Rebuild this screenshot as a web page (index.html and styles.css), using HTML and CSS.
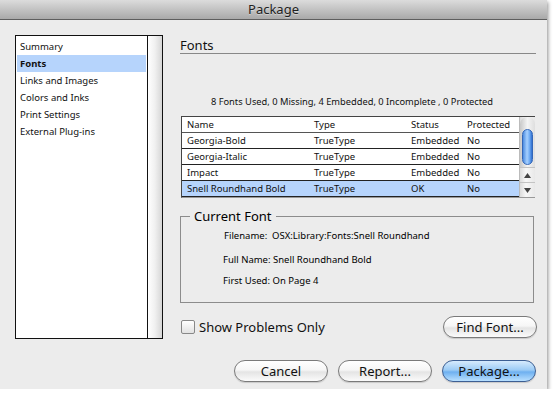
FILE: index.html
```html
<!DOCTYPE html>
<html>
<head>
    <title>Package</title>
    <link rel="stylesheet" href="styles.css">
</head>

<body>
    <div class="window">
        <div class="titlebar">Package</div>

        <div class="content">
            <div class="sidebar">
                <ul class="nav">
                    <li>Summary</li>
                    <li class="selected">Fonts</li>
                    <li>Links and Images</li>
                    <li>Colors and Inks</li>
                    <li>Print Settings</li>
                    <li>External Plug-ins</li>
                </ul>
                <div class="nav-scroll"></div>
            </div>

            <div class="main">
                <h2 class="section-title">Fonts</h2>
                <p class="summary">8 Fonts Used, 0 Missing, 4 Embedded, 0 Incomplete , 0 Protected</p>

                <div class="font-list">
                    <table class="font-table">
                        <tr class="head">
                            <td class="col-name">Name</td>
                            <td class="col-type">Type</td>
                            <td class="col-status">Status</td>
                            <td>Protected</td>
                        </tr>
                        <tr>
                            <td>Georgia-Bold</td>
                            <td>TrueType</td>
                            <td>Embedded</td>
                            <td>No</td>
                        </tr>
                        <tr>
                            <td>Georgia-Italic</td>
                            <td>TrueType</td>
                            <td>Embedded</td>
                            <td>No</td>
                        </tr>
                        <tr>
                            <td>Impact</td>
                            <td>TrueType</td>
                            <td>Embedded</td>
                            <td>No</td>
                        </tr>
                        <tr class="selected">
                            <td>Snell Roundhand Bold</td>
                            <td>TrueType</td>
                            <td>OK</td>
                            <td>No</td>
                        </tr>
                    </table>
                    <div class="scrollbar">
                        <div class="scroll-track">
                            <div class="scroll-thumb"></div>
                        </div>
                        <div class="scroll-arrow">
                            <svg width="7" height="5" viewBox="0 0 7 5"><path d="M3.5 0 L7 5 L0 5 Z" fill="#444"/></svg>
                        </div>
                        <div class="scroll-arrow">
                            <svg width="7" height="5" viewBox="0 0 7 5"><path d="M0 0 L7 0 L3.5 5 Z" fill="#444"/></svg>
                        </div>
                    </div>
                </div>

                <fieldset class="current-font">
                    <legend>Current Font</legend>
                    <div class="info-line filename">Filename:&nbsp; OSX:Library:Fonts:Snell Roundhand</div>
                    <div class="info-line">Full Name: Snell Roundhand Bold</div>
                    <div class="info-line">First Used: On Page 4</div>
                </fieldset>

                <div class="options-row">
                    <label class="checkbox-label"><span class="checkbox"></span>Show Problems Only</label>
                    <button class="btn">Find Font...</button>
                </div>
            </div>
        </div>

        <div class="actions">
            <button class="btn">Cancel</button>
            <button class="btn">Report...</button>
            <button class="btn btn-default">Package...</button>
        </div>
    </div>
</body>
</html>
```

FILE: styles.css
```css
body {
    margin: 0;
    background-color: #fff;
    font-family: "Noto Sans", "Liberation Sans", sans-serif;
    color: #111;
}

.window {
    width: 547px;
    height: 389px;
    background-color: #ececec;
    box-shadow: 1px 2px 4px rgba(0, 0, 0, 0.45);
    display: flex;
    flex-direction: column;
}

.titlebar {
    height: 19px;
    line-height: 19px;
    border-bottom: 1px solid #5e5e5e;
    background: linear-gradient(#dcdcdc, #a9a9a9);
    text-align: center;
    font-size: 13px;
    color: #222;
    text-shadow: 0 1px 0 rgba(255, 255, 255, 0.4);
}

.content {
    display: flex;
    gap: 17px;
    padding: 15px 0 0 15px;
}

/* left category list */
.sidebar {
    width: 146px;
    height: 302px;
    border: 1px solid #111;
    background-color: #fff;
    display: flex;
}

.nav {
    list-style: none;
    margin: 0;
    padding: 2px 1px 0 1px;
    flex: 1;
    font-size: 9.5px;
}

.nav li {
    height: 17px;
    line-height: 17px;
    padding-left: 3px;
}

.nav li.selected {
    background-color: #b6d4fc;
    font-weight: bold;
}

.nav-scroll {
    width: 14px;
    border-left: 1px solid #111;
    background: linear-gradient(to right, #fff, #f0f0f0 50%, #d6d6d6);
}

.main {
    width: 356px;
    font-size: 9.5px;
}

.section-title {
    margin: 2px 0 0 0;
    height: 16px;
    line-height: 16px;
    font-size: 13px;
    font-weight: normal;
    border-bottom: 1px solid #888;
}

.summary {
    margin: 42px 0 0 0;
    padding-right: 12px;
    height: 12px;
    line-height: 12px;
    font-size: 9.3px;
    text-align: center;
}

.font-list {
    margin: 8px 1px 0 1px;
    height: 80px;
    display: flex;
    border-top: 1px solid #444;
    border-left: 1px solid #444;
    border-bottom: 1px solid #999;
    background-color: #fff;
}

.font-table {
    flex: 1;
    border-collapse: collapse;
    font-size: 9.5px;
    align-self: flex-start;
}

.font-table td {
    height: 15px;
    padding: 0 0 0 5px;
    border-bottom: 1px solid #222;
    line-height: 15px;
}

.font-table .head td {
    height: 14px;
    border-bottom: 1px solid #555;
}

.font-table .col-name {
    width: 122px;
}

.font-table .col-type {
    width: 92px;
}

.font-table .col-status {
    width: 51px;
}

.font-table tr.selected td {
    background-color: #b6d4fc;
}

.scrollbar {
    width: 15px;
    border-left: 1px solid #bbb;
    background: linear-gradient(to right, #dcdcdc, #f8f8f8 40%, #e8e8e8);
    display: flex;
    flex-direction: column;
}

.scroll-track {
    flex: 1;
    padding: 12px 2px 0 2px;
    border-radius: 7px 7px 0 0;
    background: linear-gradient(to right, #c8c8c8, #f4f4f4 50%, #dedede);
}

.scroll-thumb {
    height: 36px;
    border-radius: 6px;
    border: 1px solid #3467b8;
    background: linear-gradient(to right, #4b8be0, #a6d0ff 45%, #76b0f5 70%, #2f6fd0);
    box-sizing: border-box;
}

.scroll-arrow {
    height: 14px;
    display: flex;
    align-items: center;
    justify-content: center;
    border-top: 1px solid #c4c4c4;
}

/* group box with the selected font details */
.current-font {
    box-sizing: border-box;
    height: 94px;
    margin: 11px 2px 0 0;
    padding: 6px 0 0 42px;
    border: 1px solid #8c8c8c;
    font-size: 9.5px;
    color: #000;
}

.current-font legend {
    margin-left: -33px;
    padding: 0 4px;
    font-size: 13px;
    line-height: 14px;
}

.info-line {
    height: 21px;
    line-height: 14px;
}

.info-line.filename {
    height: 24px;
    padding-left: 1px;
}

.options-row {
    margin-top: 13px;
    display: flex;
    justify-content: space-between;
    align-items: center;
}

.checkbox-label {
    display: flex;
    align-items: center;
    gap: 4px;
    font-size: 13px;
}

.checkbox {
    width: 12px;
    height: 12px;
    margin-left: 1px;
    border: 1px solid #888;
    border-radius: 2px;
    background: linear-gradient(#fff, #f0f0f0 50%, #e2e2e2);
}

.btn {
    width: 94px;
    height: 22px;
    margin-right: -1px;
    padding: 0;
    border: 1px solid #7a7a7a;
    border-radius: 11px;
    background: linear-gradient(#ffffff, #f6f6f6 45%, #e4e4e4 55%, #fbfbfb);
    font-family: "Noto Sans", "Liberation Sans", sans-serif;
    font-size: 13px;
    color: #111;
    box-shadow: 0 1px 1px rgba(0, 0, 0, 0.15);
}

.btn-default {
    border-color: #3d5f93;
    background: linear-gradient(#d6ebfd, #9ccbf5 45%, #6eb0f0 55%, #b9e0ff);
}

.actions {
    margin-top: 21px;
    padding-right: 12px;
    display: flex;
    justify-content: flex-end;
    gap: 11px;
}
```
